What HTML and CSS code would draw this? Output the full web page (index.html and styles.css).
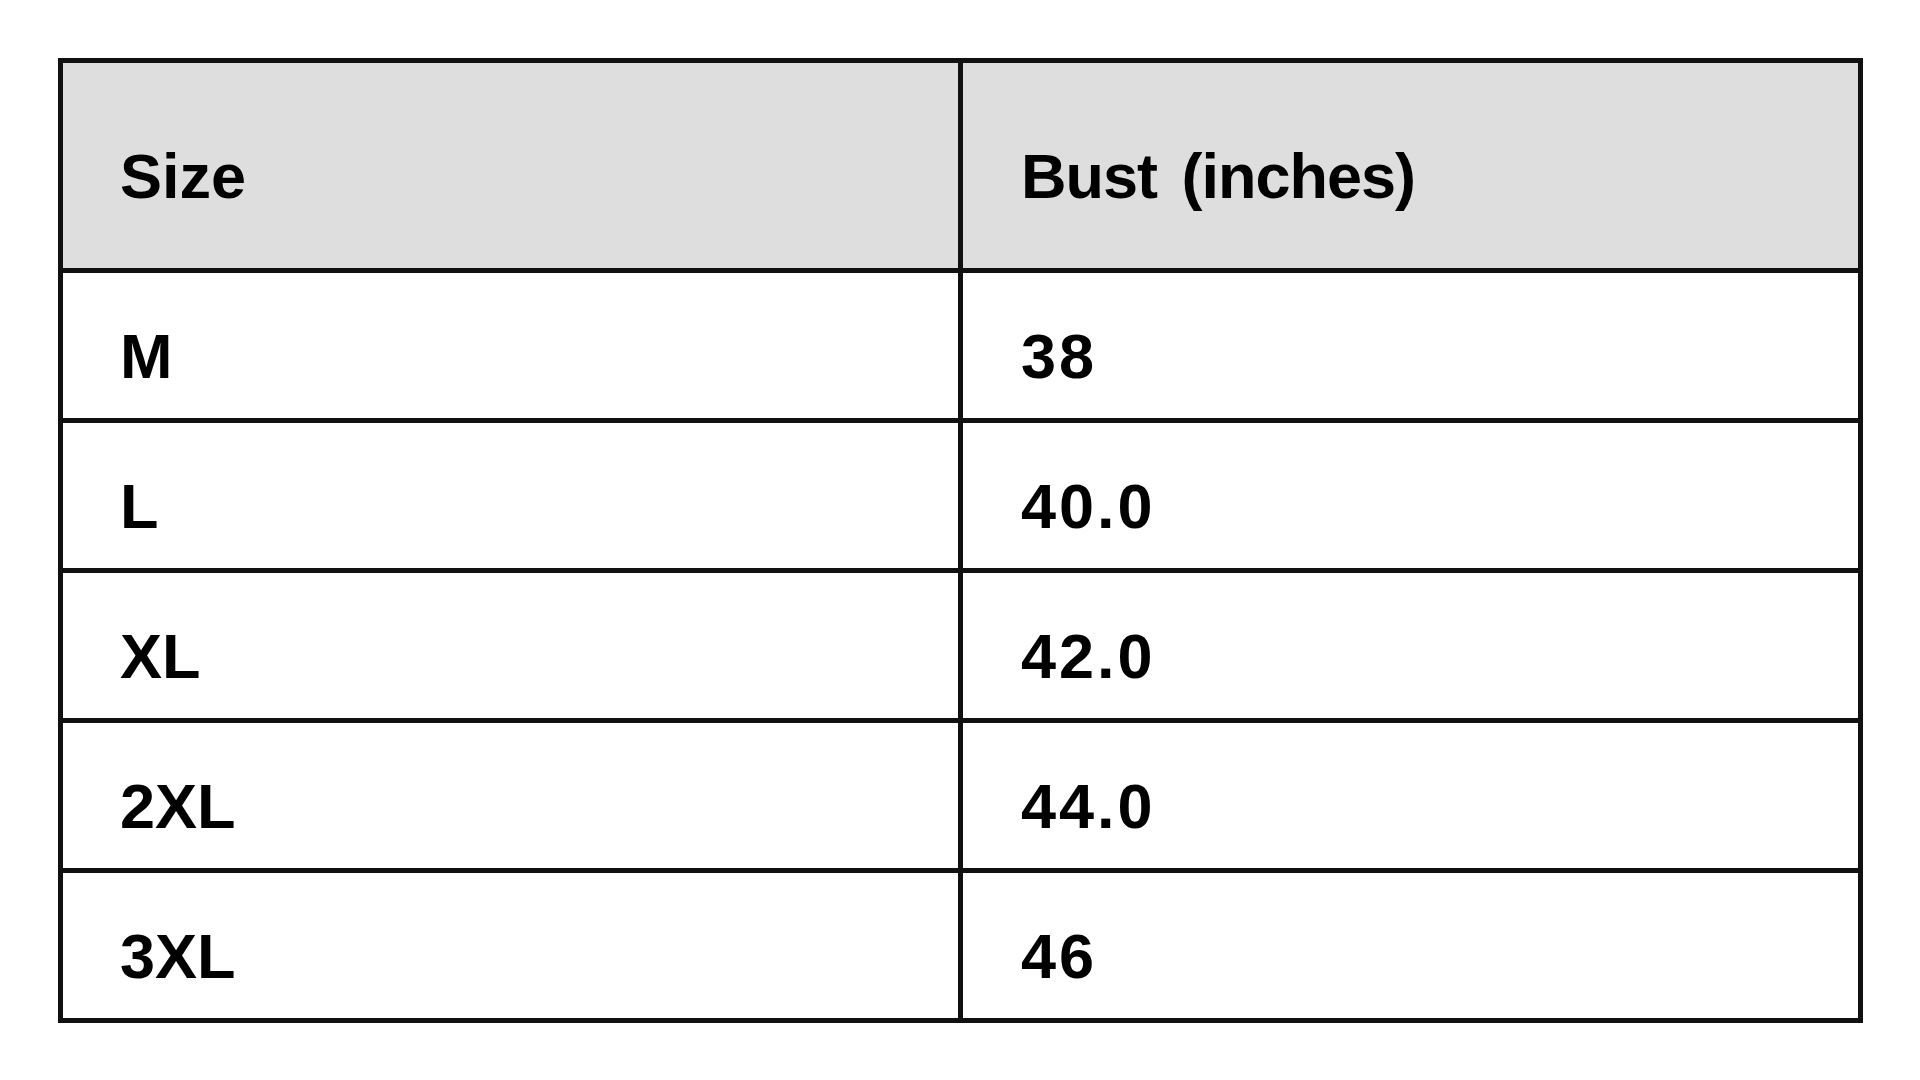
FILE: index.html
```html
<!DOCTYPE html>
<html lang="en">
<head>
<meta charset="utf-8">
<title>Size chart</title>
<link rel="stylesheet" href="styles.css">
</head>
<body>
<table class="size-table">
  <colgroup><col class="col"><col class="col"></colgroup>
  <thead>
    <tr><th>Size</th><th class="bust">Bust (inches)</th></tr>
  </thead>
  <tbody>
    <tr><td>M</td><td class="num">38</td></tr>
    <tr><td>L</td><td class="num">40.0</td></tr>
    <tr><td>XL</td><td class="num">42.0</td></tr>
    <tr><td>2XL</td><td class="num">44.0</td></tr>
    <tr><td>3XL</td><td class="num">46</td></tr>
  </tbody>
</table>
</body>
</html>
```

FILE: styles.css
```css
html, body {
  margin: 0;
  padding: 0;
  background: #ffffff;
}

body {
  padding: 58px 0 0 58px;
  font-family: "Liberation Sans", Arial, Helvetica, sans-serif;
  color: #000000;
}

.size-table {
  width: 1805px;
  table-layout: fixed;
  border-collapse: separate;
  border-spacing: 0;
  border-left: 5px solid #111111;
  border-top: 5px solid #111111;
}

.size-table .col {
  width: 50%;
}

.size-table th,
.size-table td {
  box-sizing: border-box;
  border-right: 5px solid #111111;
  border-bottom: 5px solid #111111;
  text-align: left;
  vertical-align: top;
  font-size: 63px;
  font-weight: 700;
  line-height: 72px;
  padding: 47px 0 26px 57px;
  white-space: nowrap;
}

.size-table th + th,
.size-table td + td {
  padding-left: 58px;
}

.size-table th {
  background: #dedede;
  padding-top: 77px;
  padding-bottom: 56px;
}

.size-table .bust {
  letter-spacing: -1px;
  word-spacing: 8px;
}

.size-table .num {
  letter-spacing: 3px;
}
```
